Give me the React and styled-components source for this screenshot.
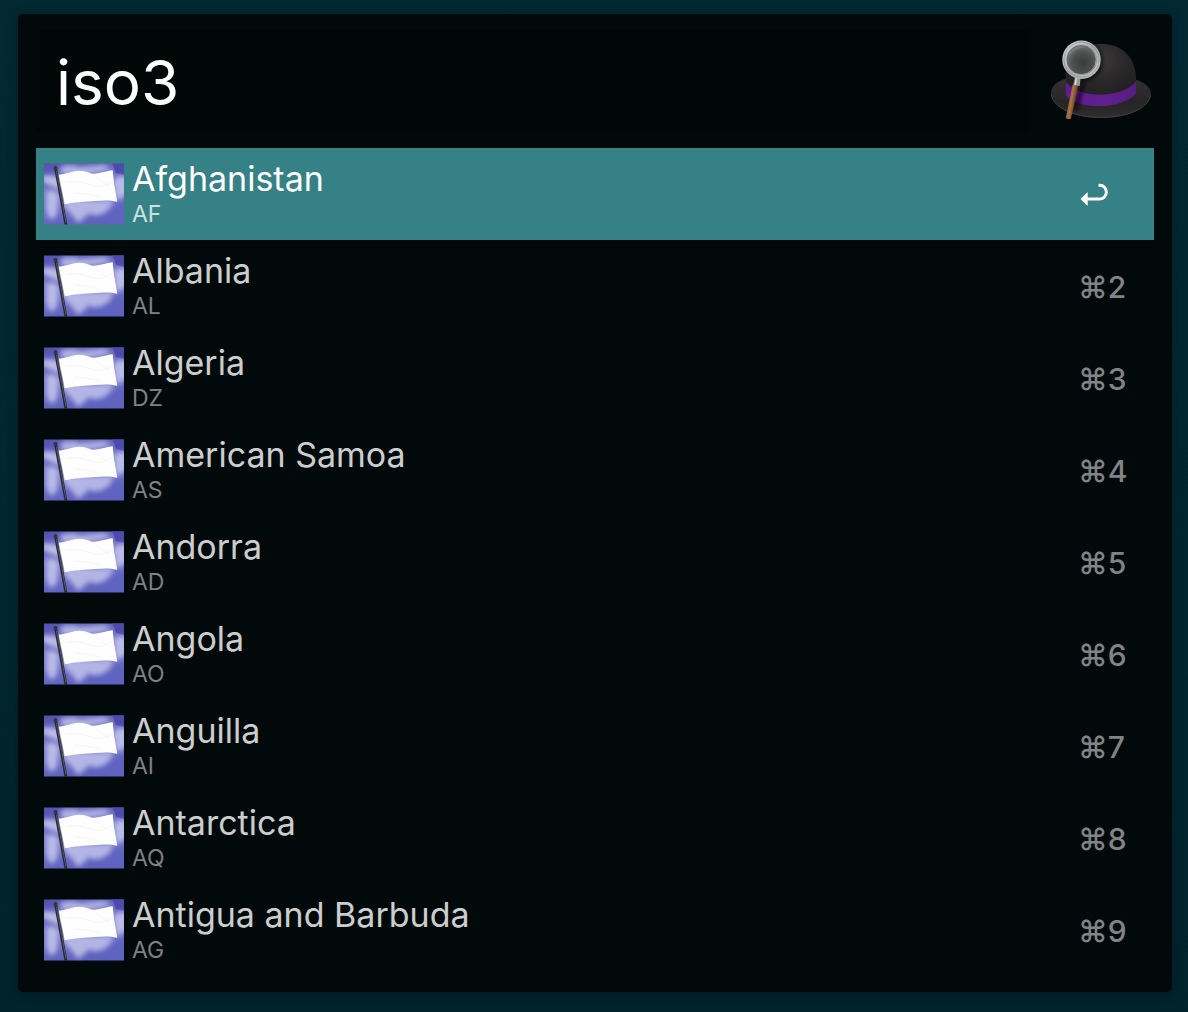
import React, { useState } from "react";
import styled, { createGlobalStyle } from "styled-components";

const GlobalStyle = createGlobalStyle`
  * { box-sizing: border-box; }
  html, body { margin: 0; background: #01252e; }
  body { font-family: Inter, "Liberation Sans", sans-serif; }
`;

const Page = styled.main`
  min-height: 100vh;
  padding: 14px 16px 20px 18px;
  background: linear-gradient(180deg, #022832 0%, #01262f 60%, #01232c 100%);
`;

const Panel = styled.section`
  padding: 16px 18px;
  border-radius: 5px;
  background: #01090b;
  box-shadow: 0 2px 12px rgba(0, 0, 0, 0.25);
`;

const SearchBar = styled.header`
  display: flex;
  align-items: center;
  gap: 12px;
  margin-bottom: 16px;
`;

const SearchInput = styled.input`
  flex: 1;
  min-width: 0;
  height: 102px;
  padding: 2px 20px 0;
  border: 0;
  outline: 0;
  background: #010607;
  color: #ffffff;
  font-family: inherit;
  font-size: 62px;
  font-weight: 400;
`;

const HatIcon = styled.svg`
  flex: none;
  width: 112px;
  height: 102px;
`;

const Results = styled.ul`
  margin: 0;
  padding: 0;
  list-style: none;
`;

const ResultButton = styled.button`
  display: flex;
  align-items: center;
  gap: 8px;
  width: 100%;
  height: 92px;
  padding: 0 0 0 8px;
  border: 0;
  outline: 0;
  font-family: inherit;
  text-align: left;
  background: ${(p) => (p.$active ? "#358186" : "transparent")};
  color: ${(p) => (p.$active ? "#ffffff" : "#cccecd")};
`;

const FlagPicture = styled.svg`
  flex: none;
  width: 80px;
  height: 62px;
`;

const Labels = styled.span`
  display: flex;
  flex: 1;
  flex-direction: column;
  min-width: 0;
  padding-bottom: 2px;
`;

const Title = styled.span`
  font-size: 34px;
  line-height: 42px;
`;

const Code = styled.span`
  font-size: 23px;
  line-height: 28px;
  color: ${(p) => (p.$active ? "#cde0e1" : "#7e8282")};
`;

const Shortcut = styled.span`
  display: flex;
  align-items: center;
  width: 76px;
  padding-top: 2px;
  color: ${(p) => (p.$active ? "#ffffff" : "#808484")};
  font-size: 30px;
  font-weight: 500;
  line-height: 40px;
`;

const ReturnIcon = styled.svg`
  width: 32px;
  height: 28px;
`;

const countries = [
  ["Afghanistan", "AF"],
  ["Albania", "AL"],
  ["Algeria", "DZ"],
  ["American Samoa", "AS"],
  ["Andorra", "AD"],
  ["Angola", "AO"],
  ["Anguilla", "AI"],
  ["Antarctica", "AQ"],
  ["Antigua and Barbuda", "AG"],
];

function FlagDefs() {
  return (
    <>
      <linearGradient id="sky" x1="0" y1="0" x2="0.3" y2="1">
        <stop offset="0" stopColor="#5150b0" />
        <stop offset="0.5" stopColor="#7577c8" />
        <stop offset="1" stopColor="#5f62be" />
      </linearGradient>
      <filter id="cloudBlur" x="-30%" y="-30%" width="160%" height="160%">
        <feGaussianBlur stdDeviation="2.6" />
      </filter>
      <clipPath id="flagFrame">
        <path d="M0 .5h80v61H0z" />
      </clipPath>
    </>
  );
}

function Flag() {
  return (
    <FlagPicture viewBox="0 0 80 62" aria-hidden="true">
      <defs>
        <FlagDefs />
      </defs>
      <g clipPath="url(#flagFrame)">
        <path d="M0 0h80v62H0z" fill="url(#sky)" />
        <path d="M68 0h12v12l-8-2z" fill="#4c4bac" />
        <g filter="url(#cloudBlur)" fill="#c6c8ee">
          <path d="M16 4Q26 0 36 4L60 2 68 7 40 12 18 12z" opacity="0.8" />
          <path d="M-3 13Q10 11 17 16L19 27Q8 24-3 18z" opacity="0.9" />
          <ellipse cx="8" cy="42" rx="6" ry="14" opacity="0.85" />
          <path d="M18 37L70 37Q67 47 58 51 48 54 45 50 40 56 34 60L28 52 20 44z" opacity="0.8" />
          <path d="M70 15Q78 12 84 14L84 30 74 38 70 30z" opacity="0.85" />
          <path d="M0 27Q9 25 18 33L18 38Q8 33 0 33z" opacity="0.4" />
        </g>
        <path
          d="M14.700 11.500C21 11.500 29 7.500 36 7.700S46 11 50 10.700 63 8 68.700 7.200L70 20l3.300 18.800C66 36.800 58 37.500 50 38S29 39.500 20.700 41.300z"
          fill="#fefefe"
        />
        <path
          d="M22 19q16-1 24 3t22-3M30 30q11 0 26 4M52 14q5 6 14 9"
          fill="none"
          stroke="#f3f3f5"
          strokeWidth="0.8"
        />
        <path d="M11.500 5L22 62" stroke="#26262c" strokeWidth="2.800" />
        <path d="M12.400 8L22 60" stroke="#6f6f74" strokeWidth="0.700" />
        <circle cx="11.500" cy="5" r="2" fill="#3a3336" />
      </g>
    </FlagPicture>
  );
}

function Hat() {
  return (
    <HatIcon viewBox="0 0 112 102" role="img" aria-label="Alfred hat">
      <defs>
        <radialGradient id="crown" cx="0.5" cy="0.28" r="0.7">
          <stop offset="0" stopColor="#3b3a3a" />
          <stop offset="0.55" stopColor="#292627" />
          <stop offset="1" stopColor="#211e20" />
        </radialGradient>
        <linearGradient id="brim" x1="0" y1="0" x2="0" y2="1">
          <stop offset="0" stopColor="#343231" />
          <stop offset="0.6" stopColor="#272425" />
          <stop offset="1" stopColor="#302d2d" />
        </linearGradient>
        <linearGradient id="band">
          <stop offset="0" stopColor="#5f1c93" />
          <stop offset="0.6" stopColor="#601f8d" />
          <stop offset="1" stopColor="#551d80" />
        </linearGradient>
        <radialGradient id="lens" cx="0.55" cy="0.6" r="0.58">
          <stop offset="0" stopColor="#3a3a3a" />
          <stop offset="0.55" stopColor="#4f5151" />
          <stop offset="1" stopColor="#7b8081" />
        </radialGradient>
        <linearGradient id="rim" x1="0" y1="0" x2="1" y2="1">
          <stop offset="0" stopColor="#d9dbdb" />
          <stop offset="0.5" stopColor="#a6a8a8" />
          <stop offset="1" stopColor="#cccece" />
        </linearGradient>
        <linearGradient id="wood" gradientUnits="userSpaceOnUse" x1="27" y1="70" x2="33" y2="71">
          <stop offset="0" stopColor="#8c5b38" />
          <stop offset="0.4" stopColor="#ab7449" />
          <stop offset="1" stopColor="#6b4427" />
        </linearGradient>
        <filter id="soft" x="-40%" y="-20%" width="180%" height="140%">
          <feGaussianBlur stdDeviation="1.800" />
        </filter>
      </defs>
      <path d="M26 48C15 51 9 56 9 63c0 14 22 25 50 25s50-11 50-24c0-7-7-12-17-15z" fill="url(#brim)" />
      <path d="M9.500 65c2 13 23 22.500 49.500 22.500S107 78 108.500 65" fill="none" stroke="#403d3d" strokeWidth="1" />
      <path d="M24 66V46C24 25 38 13.700 59 13.700s35 14 35 35v14C83 76 36 76 24 66z" fill="url(#crown)" />
      <path d="M24 52C37 69 80 69 94 51.500V63.500C80 80 37 80 24 66z" fill="url(#band)" />
      <path d="M40 50l5-1-9 32-6-1z" fill="#080509" opacity="0.600" filter="url(#soft)" />
      <circle cx="42" cy="31.500" r="19.500" fill="#050505" opacity="0.500" filter="url(#soft)" />
      <path d="M30.500 55l5.800.8L29 88.500q-3 1.300-5.300-.5z" fill="url(#wood)" />
      <path d="M33 47l5.500 1-.8 8-6.500-.8z" fill="#97999a" />
      <path d="M34.500 48l-1.500 7" stroke="#e1e2e2" strokeWidth="1.300" />
      <circle cx="39.500" cy="29.700" r="17.200" fill="url(#lens)" stroke="url(#rim)" strokeWidth="4" />
      <circle cx="39.500" cy="29.700" r="17.500" fill="none" stroke="#858989" strokeWidth="0.700" />
      <circle cx="39" cy="29.500" r="15.200" fill="none" stroke="#d0d3d3" strokeWidth="0.600" />
      <path d="M25 28c2-9 12-14 20-11-10 1-16 5-20 11z" fill="#9cabb0" opacity="0.250" />
    </HatIcon>
  );
}

function Return() {
  return (
    <ReturnIcon viewBox="0 0 32 28" role="img" aria-label="Return">
      <path d="M20.500 4.300H22a6.200 6.700 0 0 1 0 13.700H9" fill="none" stroke="currentColor" strokeWidth="2.900" />
      <path d="M2.500 18l7.200-7v14z" fill="currentColor" />
    </ReturnIcon>
  );
}

export default function App() {
  const [query, setQuery] = useState("iso3");
  const [selected, setSelected] = useState(0);
  return (
    <Page>
      <GlobalStyle />
      <Panel>
        <SearchBar>
          <SearchInput
            aria-label="Search"
            value={query}
            onChange={(e) => setQuery(e.target.value)}
          />
          <Hat />
        </SearchBar>
        <Results>
          {countries.map(([name, code], i) => {
            const active = i === selected;
            return (
              <li key={code}>
                <ResultButton type="button" $active={active} onClick={() => setSelected(i)}>
                  <Flag />
                  <Labels>
                    <Title>{name}</Title>
                    <Code $active={active}>{code}</Code>
                  </Labels>
                  <Shortcut $active={active}>{active ? <Return /> : `⌘${i + 1}`}</Shortcut>
                </ResultButton>
              </li>
            );
          })}
        </Results>
      </Panel>
    </Page>
  );
}
